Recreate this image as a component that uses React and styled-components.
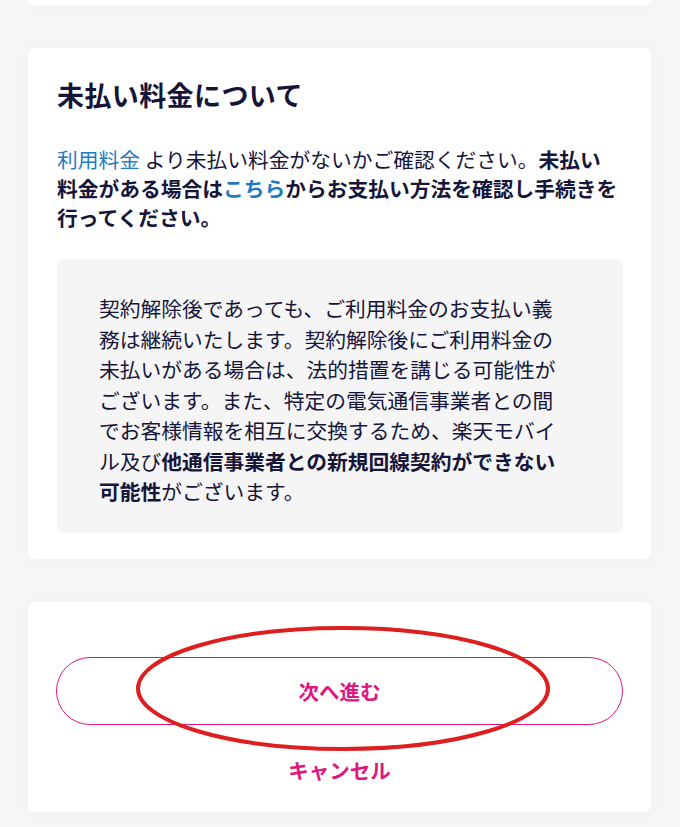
import styled, { createGlobalStyle } from 'styled-components';

const GlobalStyle = createGlobalStyle`
  body {
    margin: 0;
    background: #f6f6f6;
    font-family: "Noto Sans CJK JP", "Noto Sans", sans-serif;
    color: #16163a;
  }
`;

const Page = styled.div`
  display: flex;
  flex-direction: column;
  gap: 43px;
  padding: 0 29px 20px 28px;
`;

const Card = styled.section`
  background: #fff;
  border-radius: 6px;
  box-shadow: 0 0 14px rgba(0, 0, 0, 0.035);
  padding: ${(props) => props.$pad || '28px 28px 26px 29px'};
`;

const CardTail = styled.div`
  height: 5px;
  background: #fff;
  border-radius: 0 0 6px 6px;
  box-shadow: 0 0 14px rgba(0, 0, 0, 0.035);
`;

const Title = styled.h2`
  margin: 0;
  font-size: 27px;
  line-height: 38px;
  letter-spacing: 0.4px;
  font-weight: 700;
  color: #15153a;
`;

const Lead = styled.p`
  margin: 31px 0 0;
  max-width: 562px;
  font-size: 20.75px;
  line-height: 29px;
  font-weight: 400;
`;

const Link = styled.a`
  color: #1f7bbf;
  text-decoration: none;
  font-weight: ${(props) => (props.$bold ? 700 : 400)};
`;

const Strong = styled.b`
  font-weight: 700;
`;

const Notice = styled.div`
  margin-top: 27px;
  background: #f5f5f6;
  border-radius: 8px;
  padding: 34px 58px 26px 42px;
  font-size: 20.75px;
  line-height: 30.5px;
`;

const Actions = styled.div`
  display: flex;
  flex-direction: column;
  align-items: center;
  gap: 30px;
`;

const ButtonWrap = styled.div`
  position: relative;
  align-self: stretch;
`;

const NextButton = styled.button`
  display: block;
  width: 100%;
  height: 68px;
  border: 1.5px solid #e0157f;
  border-radius: 34px;
  background: #fff;
  color: #e0157f;
  font-family: inherit;
  font-size: 20.5px;
  font-weight: 700;
  cursor: pointer;
`;

const Mark = styled.svg`
  position: absolute;
  left: 79px;
  top: -32px;
  pointer-events: none;
`;

const Cancel = styled.a`
  color: #e0157f;
  font-size: 20.5px;
  line-height: 30px;
  font-weight: 700;
  text-decoration: none;
`;

export default function App() {
  return (
    <>
      <GlobalStyle />
      <Page>
        <CardTail />
        <Card>
          <Title>未払い料金について</Title>
          <Lead>
            <Link href="#">利用料金</Link> より未払い料金がないかご確認ください。
            <Strong>
              未払い料金がある場合は<Link href="#" $bold>こちら</Link>からお支払い方法を確認し手続きを行ってください。
            </Strong>
          </Lead>
          <Notice>
            契約解除後であっても、ご利用料金のお支払い義務は継続いたします。契約解除後にご利用料金の未払いがある場合は、法的措置を講じる可能性がございます。また、特定の電気通信事業者との間でお客様情報を相互に交換するため、楽天モバイル及び
            <Strong>他通信事業者との新規回線契約ができない可能性</Strong>がございます。
          </Notice>
        </Card>
        <Card $pad="55px 28px 27px 28px">
          <Actions>
            <ButtonWrap>
              <NextButton type="button">次へ進む</NextButton>
              <Mark width="416" height="127" viewBox="0 0 416 127">
                <ellipse cx="208" cy="63.5" rx="205" ry="60.5" fill="none" stroke="#de1f1f" strokeWidth="4" />
              </Mark>
            </ButtonWrap>
            <Cancel href="#">キャンセル</Cancel>
          </Actions>
        </Card>
      </Page>
    </>
  );
}
